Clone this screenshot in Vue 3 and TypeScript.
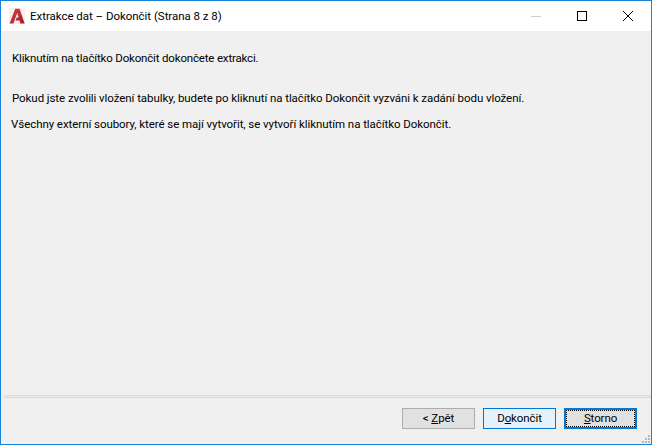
<script setup lang="ts">
const paragraphs = [
  { text: 'Kliknutím na tlačítko Dokončit dokončete extrakci.', cls: 'line-first' },
  {
    text: 'Pokud jste zvolili vložení tabulky, budete po kliknutí na tlačítko Dokončit vyzváni k zadání bodu vložení.',
    cls: 'line-second',
  },
  {
    text: 'Všechny externí soubory, které se mají vytvořit, se vytvoří kliknutím na tlačítko Dokončit.',
    cls: 'line-third',
  },
]
</script>

<template>
  <div class="window">
    <header class="titlebar">
      <span class="app-tile">
        <svg class="app-icon" viewBox="0 0 16 16" aria-hidden="true">
          <defs>
            <linearGradient id="logo-fill" x1="0" y1="0" x2="1" y2="1">
              <stop offset="0" stop-color="#d9434a" />
              <stop offset="1" stop-color="#a01c26" />
            </linearGradient>
          </defs>
          <path d="M0.6 15.5 L6.2 0.8 H10.6 L15.6 15.5 H11.4 L10.5 12.4 H6.6 L7.6 9.4 H9.6 L8.2 5 L4.4 15.5 Z" fill="url(#logo-fill)" />
        </svg>
      </span>
      <span class="title">Extrakce dat – Dokončit (Strana 8 z 8)</span>
      <div class="controls">
        <span class="ctl">
          <svg width="10" height="10" viewBox="0 0 10 10"><path d="M0 5.5H10" stroke="#cccccc" /></svg>
        </span>
        <span class="ctl">
          <svg width="10" height="10" viewBox="0 0 10 10"><rect x="0.5" y="0.5" width="9" height="9" fill="none" stroke="#000" /></svg>
        </span>
        <span class="ctl">
          <svg width="10" height="10" viewBox="0 0 10 10"><path d="M0 0L10 10M10 0L0 10" stroke="#000" /></svg>
        </span>
      </div>
    </header>
    <main class="body">
      <p v-for="p in paragraphs" :key="p.cls" :class="p.cls">{{ p.text }}</p>
    </main>
    <div class="separator"></div>
    <footer class="footer">
      <button type="button" class="btn">&lt; <u>Z</u>pět</button>
      <button type="button" class="btn btn-hover">D<u>o</u>končit</button>
      <button type="button" class="btn btn-focus"><span class="focus-ring"><u>S</u>torno</span></button>
      <svg class="grip" width="10" height="10" viewBox="0 0 10 10" aria-hidden="true">
        <path d="M7 1h2v2H7zM4 4h2v2H4zM7 4h2v2H7zM1 7h2v2H1zM4 7h2v2H4zM7 7h2v2H7z" fill="#b8b8b8" />
      </svg>
    </footer>
  </div>
</template>

<style>
html,
body {
  margin: 0;
  background: #f0f0f0;
}
</style>

<style scoped>
.window {
  box-sizing: border-box;
  width: 652px;
  height: 445px;
  display: flex;
  flex-direction: column;
  border: 1px solid #1883d7;
  background: #f0f0f0;
  color: #000;
  font-family: Roboto, "Liberation Sans", sans-serif;
  font-size: 11.5px;
  overflow: hidden;
}

.titlebar {
  height: 30px;
  flex-shrink: 0;
  display: flex;
  align-items: center;
  background: #fff;
  padding-left: 8px;
}

.app-tile {
  width: 16px;
  height: 16px;
  margin-right: 5px;
  background: #fbeeee;
  display: flex;
}

.app-icon {
  width: 16px;
  height: 16px;
}

.title {
  flex: 1;
  white-space: nowrap;
  letter-spacing: -0.03px;
}

.controls {
  display: flex;
  height: 30px;
}

.ctl {
  width: 46px;
  display: flex;
  align-items: center;
  justify-content: center;
}

.body {
  flex: 1;
  padding: 0 11px;
}

.body p {
  margin: 0;
  line-height: 16px;
  white-space: nowrap;
}

.line-first {
  padding-top: 19px;
  letter-spacing: -0.17px;
}

.line-second {
  padding-top: 24px;
  letter-spacing: -0.07px;
}

.line-third {
  padding-top: 10px;
  margin-left: -1px !important;
  letter-spacing: -0.06px;
}

.separator {
  box-sizing: border-box;
  height: 3px;
  margin: 0 0 0 3px;
  border-top: 1px solid #dcdcdc;
  border-bottom: 1px solid #dcdcdc;
  background: #eaeaea;
}

.footer {
  position: relative;
  height: 46px;
  flex-shrink: 0;
  display: flex;
  justify-content: flex-end;
  align-items: flex-start;
  gap: 8px;
  padding: 10px 14px 0 0;
  box-sizing: border-box;
}

.btn {
  box-sizing: border-box;
  width: 73px;
  height: 21px;
  padding: 0;
  border: 1px solid #adadad;
  background: #e1e1e1;
  color: #000;
  font: inherit;
  line-height: 1;
  letter-spacing: -0.1px;
}

.btn-hover {
  border-color: #0078d7;
  background: #e5f1fb;
}

.btn-focus {
  border: 2px solid #0078d7;
  padding: 0;
}

.focus-ring {
  display: block;
  height: 100%;
  box-sizing: border-box;
  border: 1px dotted #000;
  line-height: 15px;
}

.grip {
  position: absolute;
  right: 0;
  bottom: 0;
}
</style>
